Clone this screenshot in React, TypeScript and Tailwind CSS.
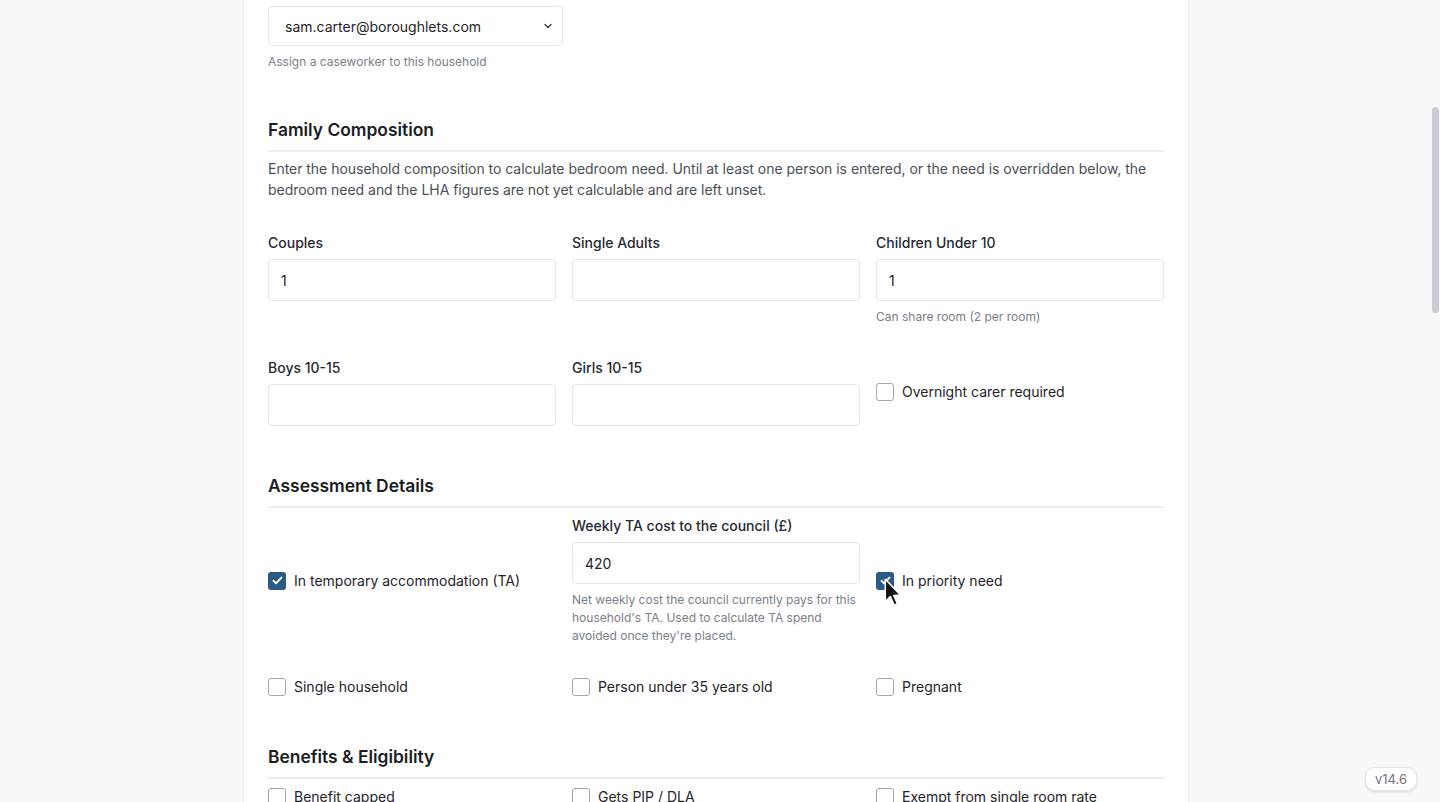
import React from "react";

const font = { fontFamily: "Inter, 'Noto Sans', sans-serif" };

function Box({ checked }: { checked?: boolean }) {
  return checked ? (
    <span className="flex h-[18px] w-[18px] shrink-0 items-center justify-center rounded-[3px] bg-[#2c5a85]">
      <svg width="13" height="13" viewBox="0 0 16 16" fill="none">
        <path d="M3.2 8.4l3 3.1 6.6-7" stroke="white" strokeWidth="2.4" strokeLinecap="round" strokeLinejoin="round" />
      </svg>
    </span>
  ) : (
    <span className="h-[18px] w-[18px] shrink-0 rounded-[3px] border-[1.5px] border-[#a3a7ae] bg-white" />
  );
}

function Check({ label, checked }: { label: string; checked?: boolean }) {
  return (
    <label className="flex h-5 items-center gap-2 text-[14px] leading-5 text-[#1f2329]">
      <Box checked={checked} />
      <span>{label}</span>
    </label>
  );
}

function Field({ label, value, help }: { label: string; value?: string; help?: React.ReactNode }) {
  return (
    <div className="flex flex-col">
      <div className="mb-[6px] text-[14px] font-medium leading-5 text-[#262a31]">{label}</div>
      <div className="flex h-[42px] items-center rounded-[4px] border border-[#e3e5e8] bg-white px-3 text-[14px] text-[#1f2329]">
        {value}
      </div>
      {help && <div className="mt-[7px] text-[12px] leading-[18px] text-[#7b8088]">{help}</div>}
    </div>
  );
}

function Heading({ children }: { children: React.ReactNode }) {
  return (
    <h2 className="mt-[46px] border-b-2 border-[#e9eef2] pb-[6px] text-[17.4px] font-semibold leading-7 text-[#1a1d23]">
      {children}
    </h2>
  );
}

export default function App() {
  return (
    <div className="relative flex h-[802px] w-full overflow-hidden bg-[#f7f8fa]" style={font}>
      <div className="flex flex-1 justify-center">
        <div className="w-[946px] border-x border-[#e6e8eb] bg-white px-6 pt-[6px]">
          <div className="flex h-10 w-[295px] items-center justify-between rounded-[4px] border border-[#e3e5e8] bg-white pl-4 pr-2 text-[14px] text-[#1f2329]">
            <span>sam.carter@boroughlets.com</span>
            <svg width="12" height="12" viewBox="0 0 12 12" fill="none">
              <path d="M3 4.5l3 3 3-3" stroke="#333" strokeWidth="1.3" strokeLinecap="round" strokeLinejoin="round" />
            </svg>
          </div>
          <div className="mt-2 text-[12px] leading-4 text-[#7b8088]">Assign a caseworker to this household</div>

          <Heading>Family Composition</Heading>
          <p className="mt-[6px] text-[14px] leading-[21px] tracking-[-0.03px] text-[#4a4f57]">
            Enter the household composition to calculate bedroom need. Until at least one person is entered, or the need is overridden below, the bedroom need and the LHA figures are not yet calculable and are left unset.
          </p>
          <div className="mt-[33px] grid grid-cols-3 items-center gap-x-4 gap-y-[32px]">
            <div className="self-start"><Field label="Couples" value="1" /></div>
            <div className="self-start"><Field label="Single Adults" /></div>
            <div className="self-start"><Field label="Children Under 10" value="1" help="Can share room (2 per room)" /></div>
            <Field label="Boys 10-15" />
            <Field label="Girls 10-15" />
            <Check label="Overnight carer required" />
          </div>

          <Heading>Assessment Details</Heading>
          <div className="mt-2 grid grid-cols-3 items-center gap-x-4 gap-y-[32px]">
            <Check label="In temporary accommodation (TA)" checked />
            <Field
              label="Weekly TA cost to the council (£)"
              value="420"
              help={<>Net weekly cost the council currently pays for this household's TA. Used to calculate TA spend avoided once they're placed.</>}
            />
            <div className="relative">
              <Check label="In priority need" checked />
              <svg className="absolute left-[6px] top-[6px]" width="22" height="31" viewBox="0 0 20 28">
                <path d="M3 2 L3 22 L7.6 17.8 L11 25.5 L14 24.2 L10.7 16.7 L17 16.4 Z" fill="#111" stroke="white" strokeWidth="1.4" strokeLinejoin="round" />
              </svg>
            </div>
            <Check label="Single household" />
            <Check label="Person under 35 years old" />
            <Check label="Pregnant" />
          </div>

          <Heading>Benefits &amp; Eligibility</Heading>
          <div className="mt-2 grid grid-cols-3 items-center gap-x-4 gap-y-[32px]">
            <Check label="Benefit capped" />
            <Check label="Gets PIP / DLA" />
            <Check label="Exempt from single room rate" />
          </div>
        </div>
      </div>
      <div className="relative w-2">
        <div className="absolute left-0 top-[107px] h-[206px] w-[7px] rounded-full bg-[#c9ccd2]" />
      </div>
      <div className="absolute bottom-[11px] right-[23px] rounded-[10px] border border-[#e6e8eb] bg-white px-[9px] py-[2px] text-[13px] leading-[18px] text-[#70757d] shadow-sm">
        v14.6
      </div>
    </div>
  );
}
